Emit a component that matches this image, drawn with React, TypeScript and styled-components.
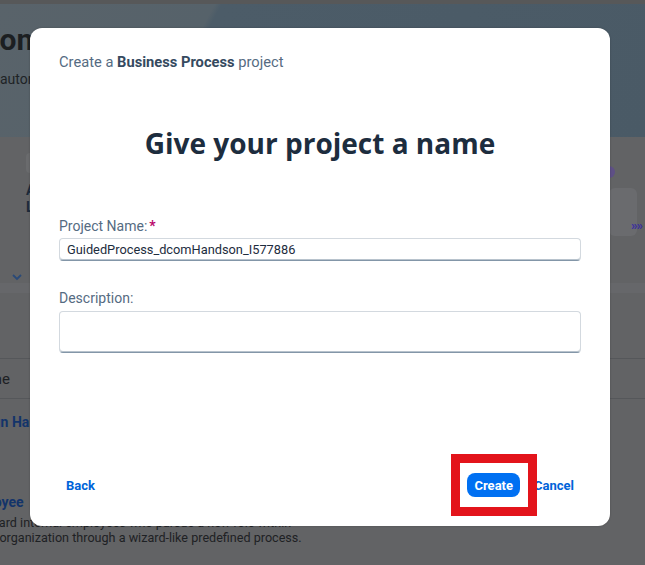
import React from "react";
import styled, { createGlobalStyle } from "styled-components";

const Global = createGlobalStyle`
  html, body { margin: 0; padding: 0; }
  body {
    font-family: Roboto, "Liberation Sans", Arial, sans-serif;
    background: #626365;
    overflow: hidden;
  }
  * { box-sizing: border-box; }
`;

const Page = styled.div`
  position: relative;
  width: 645px;
  height: 565px;
  overflow: hidden;
  background: #626365;
  display: flex;
  flex-direction: column;
`;

const TopStrip = styled.div`
  height: 4px;
  background: #575859;
  flex: none;
`;

const Hero = styled.header`
  height: 133px;
  flex: none;
  background: linear-gradient(118deg, #59636a 0%, #56626a 30%, #4c5c68 31%, #4a5a66 100%);
  padding-top: 18px;
  display: flex;
  flex-direction: column;
  gap: 12px;
  overflow: hidden;
`;

const Clip = styled.div<{ $shift: number }>`
  margin-left: -${(p) => p.$shift}px;
  white-space: nowrap;
`;

const HeroTitle = styled(Clip)`
  font-size: 30px;
  font-weight: 700;
  color: #1c1f22;
  line-height: 36px;
`;

const HeroText = styled(Clip)`
  font-size: 14px;
  color: #202326;
  line-height: 18px;
`;

const CardsArea = styled.section`
  height: 146px;
  flex: none;
  display: flex;
  justify-content: space-between;
  padding: 16px 0 0 26px;
  position: relative;
`;

const LeftCard = styled.div`
  display: flex;
  flex-direction: column;
  gap: 3px;
`;

const Tile = styled.div`
  width: 30px;
  height: 20px;
  border-radius: 4px;
  background: #6a6b6d;
  margin-bottom: 7px;
`;

const CardLine = styled.div`
  font-size: 14px;
  font-weight: 700;
  color: #1c2a3a;
  line-height: 14px;
`;

const Chevron = styled.div`
  position: absolute;
  left: 11px;
  bottom: 6px;
  width: 12px;
  height: 10px;
  color: #2a4a78;
`;

const RightCol = styled.div`
  display: flex;
  flex-direction: column;
  align-items: flex-start;
  padding-top: 13px;
  width: 38px;
`;

const Dot = styled.div`
  width: 12px;
  height: 12px;
  border-radius: 50%;
  background: #5e4f86;
  margin-left: -4px;
`;

const MiniCard = styled.div`
  margin-top: 10px;
  width: 28px;
  height: 48px;
  border-radius: 6px;
  background: #6a6b6e;
  display: flex;
  align-items: flex-end;
  justify-content: flex-end;
  padding-bottom: 3px;
  margin-left: 2px;
`;

const Chevrons = styled.span`
  font-size: 13px;
  line-height: 14px;
  color: #3b2fa0;
  font-weight: 700;
  letter-spacing: -1px;
  margin-right: -5px;
`;

const ToolBand = styled.div`
  height: 10px;
  flex: none;
  background: #66676a;
`;

const Spacer = styled.div<{ $h: number }>`
  height: ${(p) => p.$h}px;
  flex: none;
`;

const TableHead = styled.div`
  height: 41px;
  flex: none;
  border-top: 1px solid #55575a;
  border-bottom: 1px solid #55575a;
  display: flex;
  align-items: center;
  font-size: 15px;
  color: #1d2023;
  overflow: hidden;
`;

const RowTitle = styled(Clip)`
  font-size: 14px;
  font-weight: 700;
  color: #13346a;
  line-height: 18px;
`;

const RowText = styled(Clip)`
  font-size: 12.6px;
  color: #1e2124;
  line-height: 15px;
`;

const Rows = styled.div`
  display: flex;
  flex-direction: column;
  padding-top: 14px;
`;

const Dialog = styled.section`
  position: absolute;
  left: 30px;
  top: 28px;
  width: 580px;
  height: 498px;
  background: #ffffff;
  border-radius: 12px;
  box-shadow: 0 0 2px rgba(0, 0, 0, 0.25);
  display: flex;
  flex-direction: column;
  padding: 25px 29px 29px;
`;

const Crumb = styled.div`
  font-size: 14.7px;
  line-height: 18px;
  color: #556b82;
  b { color: #354a5f; font-weight: 700; }
`;

const Heading = styled.h1`
  margin: 55px 0 0;
  text-align: center;
  font-family: "Open Sans", Roboto, sans-serif;
  font-size: 28px;
  line-height: 34px;
  font-weight: 700;
  color: #1d2d3e;
`;

const Label = styled.label<{ $top: number }>`
  display: block;
  margin-top: ${(p) => p.$top}px;
  font-size: 14px;
  line-height: 18px;
  color: #556b82;
`;

const Req = styled.span`
  color: #ba066c;
  font-weight: 700;
  margin-left: 2px;
`;

const Field = styled.div<{ $h: number; $top: number }>`
  margin-top: ${(p) => p.$top}px;
  height: ${(p) => p.$h}px;
  border: 1px solid #d3d9df;
  border-bottom: 1px solid #8396a8;
  box-shadow: inset 0 -1px 0 #b8c3cd;
  border-radius: 4px;
  background: #fff;
  font-size: 12.8px;
  color: #1d2d3e;
  padding: 0 7px;
  display: flex;
  align-items: center;
`;

const Footer = styled.footer`
  margin-top: auto;
  display: flex;
  align-items: center;
  gap: 7px;
`;

const Grow = styled.div`
  flex: 1;
`;

const Button = styled.button<{ $primary?: boolean }>`
  height: 24px;
  border: none;
  border-radius: 8px;
  padding: 0 7px;
  font-family: inherit;
  font-size: 13px;
  font-weight: 700;
  cursor: pointer;
  background: ${(p) => (p.$primary ? "#0070f2" : "transparent")};
  color: ${(p) => (p.$primary ? "#ffffff" : "#0064d9")};
`;

const Highlight = styled.div`
  position: absolute;
  left: 451px;
  top: 454px;
  width: 86px;
  height: 62px;
  border: 9px solid #e3141b;
  pointer-events: none;
`;

export default function App() {
  return (
    <>
      <Global />
      <Page>
        <TopStrip />
        <Hero>
          <HeroTitle $shift={66}>Welcome to SAP Build</HeroTitle>
          <HeroText $shift={0}>automate processes and build apps and sites with SAP Build.</HeroText>
        </Hero>
        <CardsArea>
          <LeftCard>
            <Tile />
            <CardLine>A</CardLine>
            <CardLine>L</CardLine>
          </LeftCard>
          <RightCol>
            <Dot />
            <MiniCard>
              <Chevrons>»»</Chevrons>
            </MiniCard>
          </RightCol>
          <Chevron>
            <svg width="12" height="10" viewBox="0 0 12 10">
              <path d="M2 3l4 4 4-4" fill="none" stroke="currentColor" strokeWidth="1.8" />
            </svg>
          </Chevron>
        </CardsArea>
        <ToolBand />
        <Spacer $h={65} />
        <TableHead>
          <Clip $shift={30}>Name</Clip>
        </TableHead>
        <Rows>
          <RowTitle $shift={35}>Design Handson</RowTitle>
          <Spacer $h={62} />
          <RowTitle $shift={95}>Onboard Employee</RowTitle>
          <Spacer $h={4} />
          <RowText $shift={31}>Onboard internal employees who pursue a new role within</RowText>
          <RowText $shift={28}>your organization through a wizard-like predefined process.</RowText>
        </Rows>
        <Dialog>
          <Crumb>
            Create a <b>Business Process</b> project
          </Crumb>
          <Heading>Give your project a name</Heading>
          <Label $top={57}>
            Project Name:<Req>*</Req>
          </Label>
          <Field $h={23} $top={3}>GuidedProcess_dcomHandson_I577886</Field>
          <Label $top={28}>Description:</Label>
          <Field $h={42} $top={4} />
          <Footer>
            <Button>Back</Button>
            <Grow />
            <Button $primary>Create</Button>
            <Button>Cancel</Button>
          </Footer>
        </Dialog>
        <Highlight />
      </Page>
    </>
  );
}
